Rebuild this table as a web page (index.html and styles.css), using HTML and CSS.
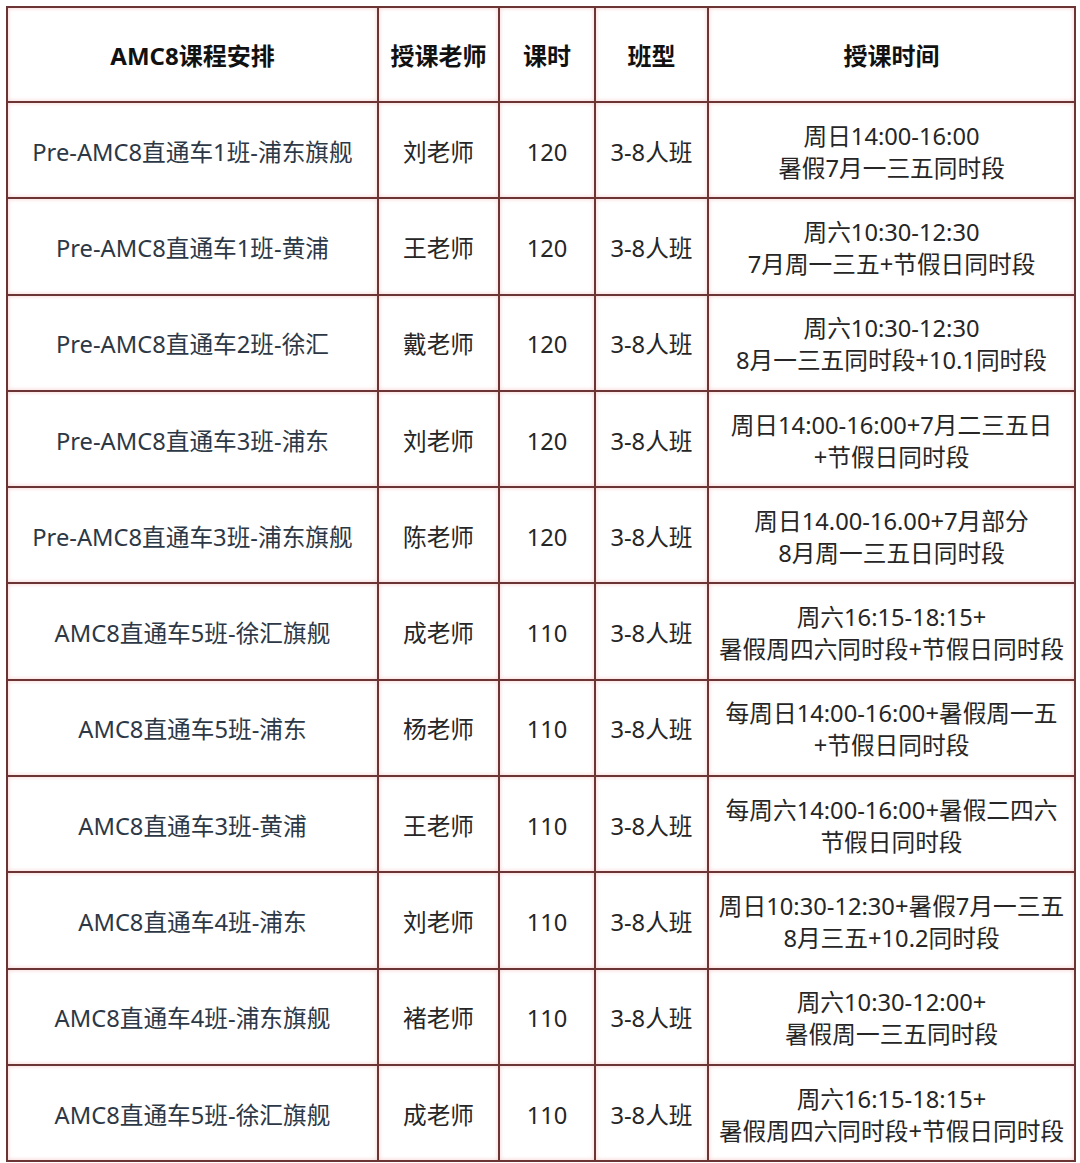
FILE: index.html
```html
<!DOCTYPE html>
<html lang="zh">
<head>
<meta charset="utf-8">
<title>AMC8课程安排</title>
<link rel="stylesheet" href="styles.css">
</head>
<body>
<table class="schedule">
  <colgroup>
    <col class="c-course"><col class="c-teacher"><col class="c-hours"><col class="c-type"><col class="c-time">
  </colgroup>
  <thead>
    <tr class="head-row">
      <th>AMC8课程安排</th><th>授课老师</th><th>课时</th><th>班型</th><th>授课时间</th>
    </tr>
  </thead>
  <tbody>
    <tr><td class="course">Pre-AMC8直通车1班-浦东旗舰</td><td>刘老师</td><td>120</td><td>3-8人班</td><td>周日14:00-16:00<br>暑假7月一三五同时段</td></tr>
    <tr><td class="course">Pre-AMC8直通车1班-黄浦</td><td>王老师</td><td>120</td><td>3-8人班</td><td>周六10:30-12:30<br>7月周一三五+节假日同时段</td></tr>
    <tr><td class="course">Pre-AMC8直通车2班-徐汇</td><td>戴老师</td><td>120</td><td>3-8人班</td><td>周六10:30-12:30<br>8月一三五同时段+10.1同时段</td></tr>
    <tr><td class="course">Pre-AMC8直通车3班-浦东</td><td>刘老师</td><td>120</td><td>3-8人班</td><td>周日14:00-16:00+7月二三五日<br>+节假日同时段</td></tr>
    <tr><td class="course">Pre-AMC8直通车3班-浦东旗舰</td><td>陈老师</td><td>120</td><td>3-8人班</td><td>周日14.00-16.00+7月部分<br>8月周一三五日同时段</td></tr>
    <tr><td class="course">AMC8直通车5班-徐汇旗舰</td><td>成老师</td><td>110</td><td>3-8人班</td><td>周六16:15-18:15+<br>暑假周四六同时段+节假日同时段</td></tr>
    <tr><td class="course">AMC8直通车5班-浦东</td><td>杨老师</td><td>110</td><td>3-8人班</td><td>每周日14:00-16:00+暑假周一五<br>+节假日同时段</td></tr>
    <tr><td class="course">AMC8直通车3班-黄浦</td><td>王老师</td><td>110</td><td>3-8人班</td><td>每周六14:00-16:00+暑假二四六<br>节假日同时段</td></tr>
    <tr><td class="course">AMC8直通车4班-浦东</td><td>刘老师</td><td>110</td><td>3-8人班</td><td>周日10:30-12:30+暑假7月一三五<br>8月三五+10.2同时段</td></tr>
    <tr><td class="course">AMC8直通车4班-浦东旗舰</td><td>褚老师</td><td>110</td><td>3-8人班</td><td>周六10:30-12:00+<br>暑假周一三五同时段</td></tr>
    <tr><td class="course">AMC8直通车5班-徐汇旗舰</td><td>成老师</td><td>110</td><td>3-8人班</td><td>周六16:15-18:15+<br>暑假周四六同时段+节假日同时段</td></tr>
  </tbody>
</table>
</body>
</html>
```
FILE: styles.css
```css
html, body {
  margin: 0;
  padding: 0;
  background: #fff;
}
body {
  padding: 6px 0 0 6px;
  font-family: "Noto Sans", "Noto Sans CJK SC", sans-serif;
}
.schedule {
  border-collapse: collapse;
  table-layout: fixed;
  width: 1068px;
  color: #262626;
}
.c-course { width: 371px; }
.c-teacher { width: 121px; }
.c-hours { width: 96px; }
.c-type { width: 113px; }
.c-time { width: 367px; }
.schedule th,
.schedule td {
  border: 2px solid #6b3535;
  text-align: center;
  vertical-align: middle;
  padding: 0;
  box-shadow: inset 0 0 4px rgba(225, 110, 110, 0.35);
  white-space: nowrap;
}
.schedule th {
  height: 93px;
  font-size: 24px;
  font-weight: 700;
  color: #111;
}
.schedule td {
  height: 91.3px;
  padding-top: 3px;
  font-size: 23.7px;
  line-height: 32px;
  font-weight: 400;
}
.schedule td.course {
  color: #2d3846;
}
```
